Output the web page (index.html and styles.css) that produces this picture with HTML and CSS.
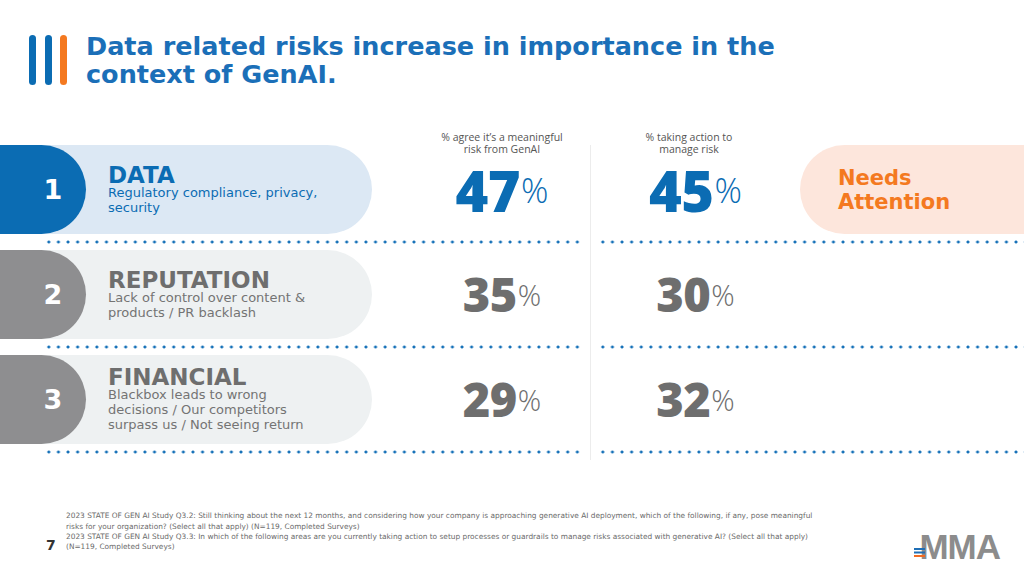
FILE: index.html
```html
<!DOCTYPE html>
<html lang="en">
<head>
<meta charset="utf-8">
<title>Data related risks</title>
<link rel="stylesheet" href="styles.css">
</head>
<body>
<div class="slide">
  <header class="title-row">
    <div class="bars"><span class="bar bar-blue"></span><span class="bar bar-blue"></span><span class="bar bar-orange"></span></div>
    <h1 class="title">Data related risks increase in importance in the<br>context of GenAI.</h1>
  </header>

  <section class="grid">
    <div class="hdr hdr-a">% agree it’s a meaningful<br>risk from GenAI</div>
    <div class="hdr hdr-b">% taking action to<br>manage risk</div>

    <div class="cat cat-blue">
      <div class="num">1</div>
      <div class="cat-text">
        <div class="cat-name">DATA</div>
        <div class="cat-desc">Regulatory compliance, privacy,<br>security</div>
      </div>
    </div>
    <div class="stat stat-a stat-big"><span class="val">47</span><span class="pct">%</span></div>
    <div class="stat stat-b stat-big"><span class="val">45</span><span class="pct">%</span></div>
    <div class="attn"><div class="attn-pill">Needs<br>Attention</div></div>
    <div class="dots dots-left"></div>
    <div class="dots dots-right"></div>

    <div class="cat cat-gray">
      <div class="num">2</div>
      <div class="cat-text">
        <div class="cat-name">REPUTATION</div>
        <div class="cat-desc">Lack of control over content &amp;<br>products / PR backlash</div>
      </div>
    </div>
    <div class="stat stat-a"><span class="val">35</span><span class="pct">%</span></div>
    <div class="stat stat-b"><span class="val">30</span><span class="pct">%</span></div>
    <div class="dots dots-left"></div>
    <div class="dots dots-right"></div>

    <div class="cat cat-gray">
      <div class="num">3</div>
      <div class="cat-text">
        <div class="cat-name">FINANCIAL</div>
        <div class="cat-desc">Blackbox leads to wrong<br>decisions / Our competitors<br>surpass us / Not seeing return</div>
      </div>
    </div>
    <div class="stat stat-a"><span class="val">29</span><span class="pct">%</span></div>
    <div class="stat stat-b"><span class="val">32</span><span class="pct">%</span></div>
    <div class="dots dots-left"></div>
    <div class="dots dots-right"></div>
  </section>

  <footer class="footer">
    <div class="page-num">7</div>
    <div class="notes">
      <p class="note note-1">2023 STATE OF GEN AI Study Q3.2: Still thinking about the next 12 months, and considering how your company is approaching generative AI deployment, which of the following, if any, pose meaningful<br>risks for your organization? (Select all that apply) (N=119, Completed Surveys)</p>
      <p class="note note-2">2023 STATE OF GEN AI Study Q3.3: In which of the following areas are you currently taking action to setup processes or guardrails to manage risks associated with generative AI? (Select all that apply)<br>(N=119, Completed Surveys)</p>
    </div>
    <div class="logo">
      <span class="logo-text">MMA</span>
      <svg class="logo-stripes" width="12" height="11" viewBox="0 0 12 11">
        <rect x="0" y="0" width="11" height="2" fill="#1f6fb6"/>
        <rect x="0" y="3.5" width="11" height="2" fill="#1f6fb6"/>
        <rect x="0" y="7" width="11" height="2" fill="#f26b21"/>
      </svg>
    </div>
  </footer>
</div>
</body>
</html>
```

FILE: styles.css
```css
html, body {
  margin: 0;
  padding: 0;
  background: #ffffff;
}

.slide {
  width: 1024px;
  height: 576px;
  overflow: hidden;
  position: relative;
  background: #ffffff;
  font-family: "DejaVu Sans", sans-serif;
}

/* ---------- title ---------- */
.title-row {
  display: flex;
  align-items: flex-start;
  gap: 19px;
  padding: 32px 0 0 29px;
}

.bars {
  display: flex;
  gap: 8.5px;
  margin-top: 3px;
}

.bar {
  display: block;
  width: 7px;
  height: 50px;
  border-radius: 4px;
}

.bar-blue { background: #0b6cb3; }
.bar-orange { background: #f47920; }

.title {
  margin: 0;
  font: 700 25.5px/28px "DejaVu Sans", sans-serif;
  color: #1b6fb8;
  white-space: nowrap;
}

/* ---------- table ---------- */
.grid {
  display: grid;
  grid-template-columns: 414px 176px 210px 224px;
  grid-template-rows: 14px 89px 16px 89px 16px 89px 16px;
  margin-top: 43px;
}

.hdr {
  align-self: start;
  font: 400 10.5px/12px "Open Sans", sans-serif;
  color: #555555;
  text-align: center;
  white-space: nowrap;
}

.hdr-a { grid-column: 2; }
.hdr-b { grid-column: 3; padding-right: 12px; }

.cat {
  grid-column: 1;
  display: flex;
  align-items: center;
  width: 372px;
  height: 89px;
  border-radius: 0 45px 45px 0;
}

.cat-blue { background: #dce8f4; }
.cat-gray { background: #eef1f2; }

.num {
  box-sizing: border-box;
  width: 86px;
  height: 100%;
  flex: none;
  display: flex;
  align-items: center;
  justify-content: center;
  padding-left: 20px;
  border-radius: 0 45px 45px 0;
  font: 700 27px/1 "DejaVu Sans", sans-serif;
  color: #ffffff;
}

.cat-blue .num { background: #0b6cb3; }
.cat-gray .num { background: #8e8e90; }

.cat-text {
  padding-left: 22px;
}

.cat-name {
  font: 700 23px/20px "DejaVu Sans", sans-serif;
}

.cat-desc {
  font: 400 13px/15px "DejaVu Sans", sans-serif;
  white-space: nowrap;
}

.cat-blue .cat-name, .cat-blue .cat-desc { color: #0b6cb3; }
.cat-gray .cat-name { color: #6e6e6e; }
.cat-gray .cat-desc { color: #747474; }

.stat {
  display: flex;
  align-items: center;
  justify-content: center;
  color: #6e6e6e;
  white-space: nowrap;
}

.stat-a { grid-column: 2; }
.stat-b { grid-column: 3; border-left: 1px solid #ececec; }

.val {
  font: 800 47px/1 "Open Sans", sans-serif;
  letter-spacing: -0.5px;
}

.pct {
  font: 300 29px/1 "Open Sans", sans-serif;
  margin-left: 1px;
}

.stat-big { color: #0b6cb3; }
.stat-big .val { font-size: 56px; }
.stat-big .pct { font-size: 34px; }

.attn {
  grid-column: 4;
}

.attn-pill {
  box-sizing: border-box;
  height: 89px;
  display: flex;
  align-items: center;
  padding-left: 38px;
  border-radius: 45px 0 0 45px;
  background: #fde6dc;
  color: #f47920;
  font: 700 21px/24px "DejaVu Sans", sans-serif;
}

.dots {
  background-image: radial-gradient(circle, #1470b8 1.2px, rgba(20, 112, 184, 0) 1.8px);
  background-size: 9.62px 4px;
  background-repeat: repeat-x;
  background-position: 0 center;
}

.dots-left {
  grid-column: 1 / 3;
  margin: 0 10px 0 44px;
}

.dots-right {
  grid-column: 3 / 5;
  border-left: 1px solid #ececec;
  padding-left: 7px;
  background-origin: content-box;
  background-clip: content-box;
}

/* ---------- footer ---------- */
.footer {
  display: flex;
  align-items: flex-start;
  margin-top: 50px;
  padding: 0 24px 0 46px;
}

.page-num {
  margin-top: 28px;
  width: 20px;
  font: 700 14px/14px "DejaVu Sans", sans-serif;
  color: #333333;
}

.notes {
  color: #6a6a6a;
  font-family: "DejaVu Sans", sans-serif;
  white-space: nowrap;
}

.note {
  margin: 0;
  font-size: 7.4px;
}

.note-1 { line-height: 11px; }
.note-2 { line-height: 9.5px; }

.logo {
  position: relative;
  margin-left: auto;
  margin-top: 24px;
}

.logo-text {
  display: block;
  font: 700 35px/26px "Liberation Sans", sans-serif;
  color: #8c8c8c;
  letter-spacing: -1px;
}

.logo-stripes {
  position: absolute;
  left: -5px;
  top: 14px;
}
```
